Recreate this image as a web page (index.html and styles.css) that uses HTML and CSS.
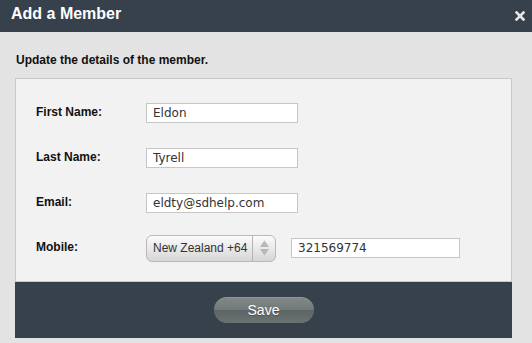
FILE: index.html
```html
<!DOCTYPE html>
<html lang="en">
<head>
<meta charset="utf-8">
<title>Add a Member</title>
<link rel="stylesheet" href="styles.css">
</head>
<body>
<div class="dialog">
  <header class="header">
    <h1 class="title">Add a Member</h1>
    <button class="close" aria-label="Close">
      <svg width="10" height="10" viewBox="0 0 10 10"><path d="M1.5 1.5 L8.5 8.5 M8.5 1.5 L1.5 8.5" stroke="#e6e6e6" stroke-width="2.6" stroke-linecap="square"/></svg>
    </button>
  </header>
  <p class="intro">Update the details of the member.</p>
  <div class="panel">
    <div class="form">
      <label class="label">First Name:</label>
      <div class="field"><input class="input" value="Eldon"></div>
      <label class="label">Last Name:</label>
      <div class="field"><input class="input" value="Tyrell"></div>
      <label class="label">Email:</label>
      <div class="field"><input class="input" value="eldty@sdhelp.com"></div>
      <label class="label">Mobile:</label>
      <div class="field mobile">
        <div class="select">
          <span class="select-text">New Zealand +64</span>
          <span class="spinner">
            <svg width="11" height="18" viewBox="0 0 11 18"><path d="M5.5 1.5 L10 8 L1 8 Z" fill="#b8b8b8"/><path d="M1 10 L10 10 L5.5 16.5 Z" fill="#b8b8b8"/></svg>
          </span>
        </div>
        <input class="input phone" value="321569774">
      </div>
    </div>
  </div>
  <footer class="footer">
    <button class="save">Save</button>
  </footer>
</div>
</body>
</html>
```
FILE: styles.css
```css
* { box-sizing: border-box; }
html, body { margin: 0; padding: 0; }
body {
  background: #e3e3e3;
  font-family: "Liberation Sans", Arial, sans-serif;
  color: #111;
  width: 532px;
  height: 343px;
  overflow: hidden;
}
.header {
  height: 32px;
  background: #36414c;
  display: flex;
  align-items: flex-start;
  justify-content: space-between;
  padding: 0 7px 0 11px;
}
.title {
  margin: 0;
  padding-top: 5px;
  font-size: 16px;
  line-height: 18px;
  font-weight: bold;
  color: #fff;
}
.close {
  border: 0;
  background: none;
  padding: 0;
  margin-top: 11px;
  width: 10px;
  height: 10px;
  display: block;
  cursor: pointer;
}
.close svg { display: block; }
.intro {
  margin: 0;
  padding: 21px 0 0 16px;
  font-size: 12px;
  line-height: 14px;
  font-weight: bold;
  height: 46px;
}
.panel {
  margin: 0 20px 0 15px;
  background: #f2f2f2;
  border: 1px solid #c8c8c8;
  padding: 24px 0 23px 20px;
}
.form {
  display: grid;
  grid-template-columns: 110px 1fr;
  grid-auto-rows: 20px;
  row-gap: 25px;
}
.label {
  align-self: center;
  font-size: 12px;
  line-height: 14px;
  font-weight: bold;
  padding-bottom: 2px;
}
.field {
  display: flex;
  align-items: center;
  height: 20px;
}
.input {
  width: 152px;
  height: 20px;
  border: 1px solid #c6c6c6;
  background: #fff;
  padding: 0 6px;
  font-family: "DejaVu Sans", Verdana, sans-serif;
  font-size: 12px;
  color: #333;
  outline: none;
}
.mobile { gap: 15px; }
.select {
  width: 130px;
  height: 27px;
  flex: none;
  border: 1px solid #b9b9b9;
  border-radius: 6px;
  background: linear-gradient(#fbfbfb, #e9e9e9 50%, #d6d6d6);
  display: flex;
  align-items: center;
  justify-content: space-between;
  padding-left: 6px;
}
.select-text {
  font-size: 12px;
  color: #333;
  padding-bottom: 1px;
}
.spinner {
  width: 23px;
  height: 25px;
  border-left: 1px solid #b5b5b5;
  display: flex;
  align-items: center;
  justify-content: center;
}
.spinner svg { display: block; }
.phone { width: 169px; }
.footer {
  margin: 0 20px 0 15px;
  height: 56px;
  background: #36414c;
  display: flex;
  justify-content: center;
  padding-top: 15px;
}
.save {
  width: 100px;
  height: 26px;
  border: 0;
  border-radius: 13px;
  background: linear-gradient(#818a88, #717a78 48%, #5d6664 52%, #6a7371);
  box-shadow: inset 0 1px 0 rgba(255,255,255,0.12);
  color: #fff;
  font-family: "Liberation Sans", Arial, sans-serif;
  font-size: 14px;
  padding: 0 0 1px 0;
  text-shadow: 0 1px 0 rgba(0,0,0,0.25);
  cursor: pointer;
}
```
